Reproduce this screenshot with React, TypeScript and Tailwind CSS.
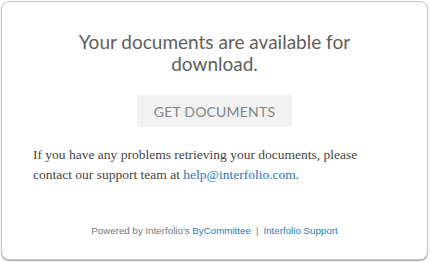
import React from 'react';

export default function App() {
  return (
    <div className="w-[430px] h-[263px] bg-white pt-px pl-px">
      <div className="w-[427px] h-[259px] rounded-[8px] border border-[#c8c8c8] bg-white shadow-[0_1px_1px_rgba(0,0,0,0.35)] flex flex-col items-center">
        <h1 className="mt-[29px] w-[300px] text-center text-[19px] leading-[22px] font-normal text-[#5e5e5e] font-['Lato',sans-serif]">
          Your documents are available for download.
        </h1>
        <button className="mt-[20px] w-[155px] h-[32px] bg-[#f2f2f2] text-[#858585] text-[14px] font-['Lato',sans-serif] tracking-[0.2px]">
          GET DOCUMENTS
        </button>
        <p className="mt-[18px] self-start pl-[31px] pr-[60px] text-[13.5px] leading-[20px] text-[#444] font-['Liberation_Serif',serif]">
          If you have any problems retrieving your documents, please contact our support team at{' '}
          <a className="text-[#2a76b5]" href="#">help@interfolio.com</a>.
        </p>
        <div className="mt-auto mb-[20px] text-[9.75px] text-[#777] font-['Liberation_Sans',sans-serif]">
          Powered by Interfolio's <a className="text-[#2a7ab8]" href="#">ByCommittee</a>
          <span className="mx-[5px]">|</span>
          <a className="text-[#2a7ab8]" href="#">Interfolio Support</a>
        </div>
      </div>
    </div>
  );
}
